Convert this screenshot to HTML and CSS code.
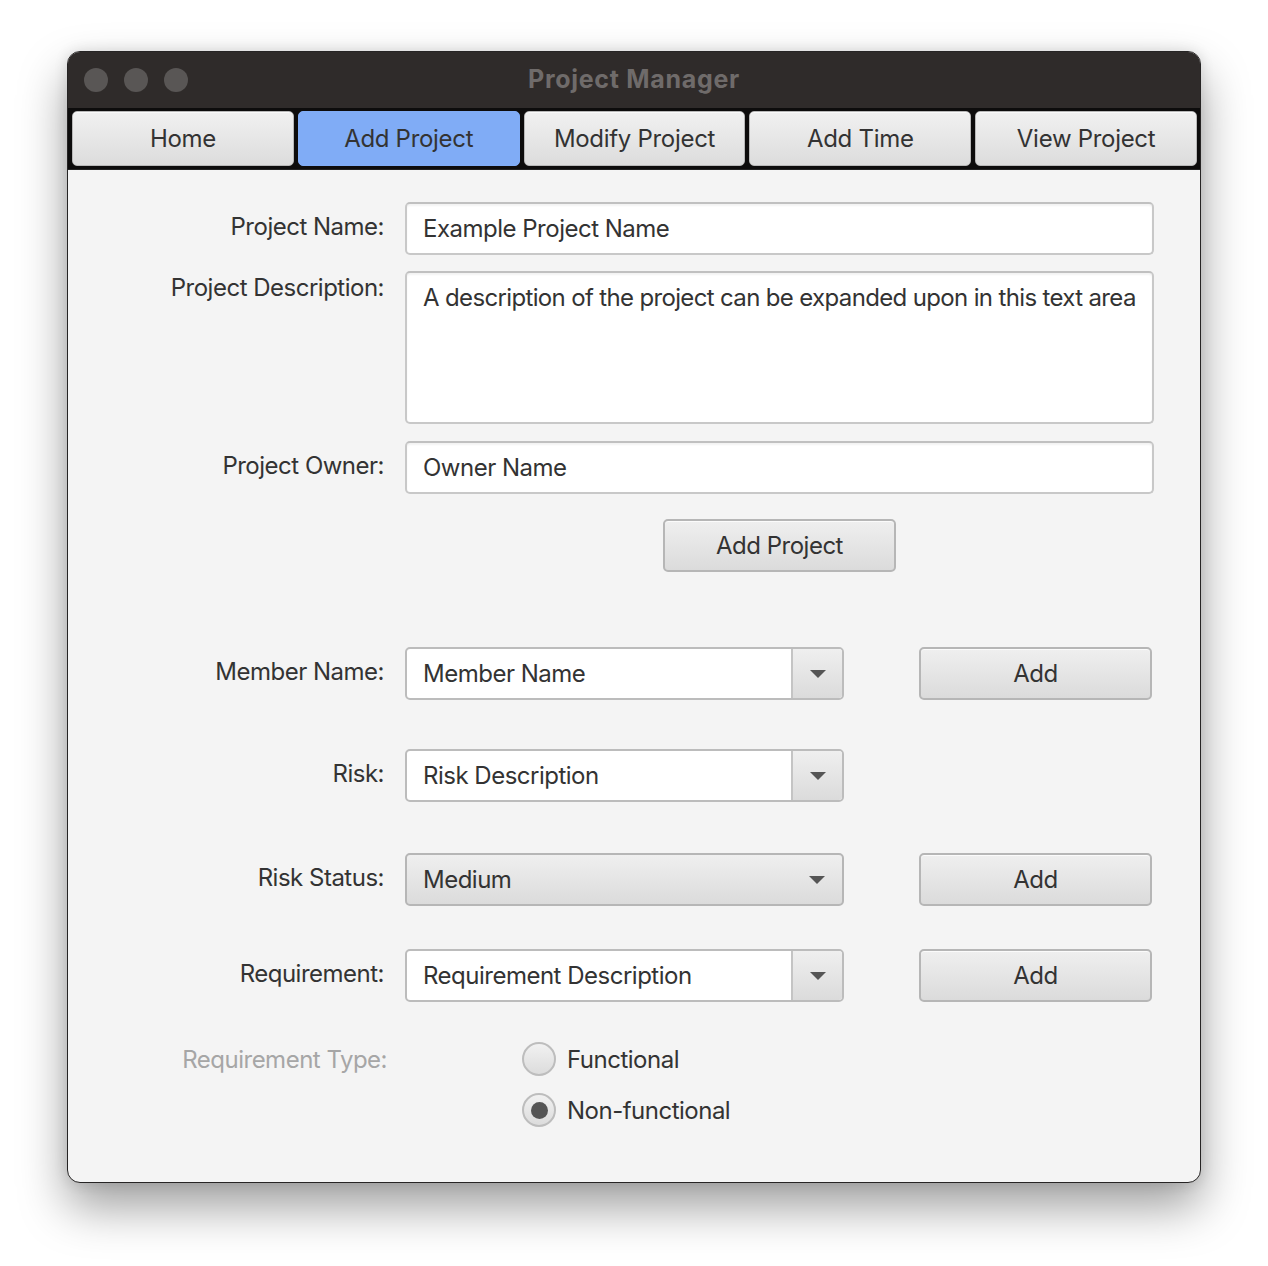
FILE: index.html
```html
<!DOCTYPE html>
<html>
<head>
<meta charset="utf-8">
<link rel="stylesheet" href="styles.css">
</head>
<body>
<div class="window">
  <div class="titlebar">
    <div class="lights"><span class="light"></span><span class="light"></span><span class="light"></span></div>
    <div class="title">Project Manager</div>
  </div>
  <div class="tabbar">
    <div class="tab">Home</div>
    <div class="tab active">Add Project</div>
    <div class="tab">Modify Project</div>
    <div class="tab">Add Time</div>
    <div class="tab">View Project</div>
  </div>
  <div class="content">
    <div class="row r-name">
      <div class="label">Project Name:</div>
      <div class="field wide">Example Project Name</div>
    </div>
    <div class="row r-desc top">
      <div class="label desc-label">Project Description:</div>
      <div class="field wide area">A description of the project can be expanded upon in this text area</div>
    </div>
    <div class="row r-owner">
      <div class="label">Project Owner:</div>
      <div class="field wide">Owner Name</div>
    </div>
    <div class="row r-addproj">
      <div class="label"></div>
      <div class="btn addproj">Add Project</div>
    </div>
    <div class="row r-member">
      <div class="label">Member Name:</div>
      <div class="combo"><div class="combo-text">Member Name</div><div class="combo-arrow"><span class="tri"></span></div></div>
      <div class="btn add">Add</div>
    </div>
    <div class="row r-risk">
      <div class="label">Risk:</div>
      <div class="combo"><div class="combo-text">Risk Description</div><div class="combo-arrow"><span class="tri"></span></div></div>
    </div>
    <div class="row r-status">
      <div class="label">Risk Status:</div>
      <div class="combo choice"><div class="combo-text">Medium</div><div class="combo-arrow plain"><span class="tri"></span></div></div>
      <div class="btn add">Add</div>
    </div>
    <div class="row r-req">
      <div class="label">Requirement:</div>
      <div class="combo"><div class="combo-text">Requirement Description</div><div class="combo-arrow"><span class="tri"></span></div></div>
      <div class="btn add">Add</div>
    </div>
    <div class="row r-type top">
      <div class="label disabled">Requirement Type:</div>
      <div class="radios">
        <div class="radio"><span class="dot"></span><span class="rtext">Functional</span></div>
        <div class="radio"><span class="dot on"></span><span class="rtext">Non-functional</span></div>
      </div>
    </div>
  </div>
</div>
</body>
</html>
```
FILE: styles.css
```css
* { box-sizing: border-box; }
html, body { margin: 0; padding: 0; background: #ffffff; }
body {
  width: 1268px;
  height: 1266px;
  padding: 51px 67px 0 67px;
  font-family: Inter, "Noto Sans", "Liberation Sans", sans-serif;
  color: #333333;
}
.window {
  width: 1134px;
  height: 1132px;
  border: 1px solid #262424;
  border-radius: 13px;
  overflow: hidden;
  background: #f4f4f4;
  box-shadow: 0 24px 48px rgba(0,0,0,0.38), 0 0 14px rgba(0,0,0,0.12);
  display: flex;
  flex-direction: column;
}
.titlebar {
  height: 56px;
  background: #2f2b2a;
  display: flex;
  align-items: center;
  position: relative;
}
.lights { display: flex; gap: 16px; padding-left: 16px; }
.light { width: 24px; height: 24px; border-radius: 50%; background: #595655; display: block; }
.title {
  position: absolute;
  left: 0; right: 0;
  top: 12px;
  text-align: center;
  font-weight: 700;
  font-size: 25px;
  color: #6f6b6a;
  letter-spacing: 0.7px;
}
.tabbar {
  height: 62px;
  background: #0d0c0c;
  display: flex;
  gap: 4px;
  padding: 3px 3px 3px 4px;
  border-bottom: 1px solid #222;
}
.tab {
  flex: 1;
  border-radius: 5px;
  border: 1px solid #b8b8b8;
  background: linear-gradient(#f1f1f1, #dcdcdc);
  box-shadow: inset 0 1px 0 #fafafa;
  display: flex;
  align-items: center;
  justify-content: center;
  font-size: 24px;
  color: #333;
  letter-spacing: -0.3px;
}
.tab.active {
  background: #80acf6;
  border-color: #80acf6;
  box-shadow: none;
}
.content {
  flex: 1;
  padding-top: 32px;
}
.row { display: flex; align-items: center; }
.row.top { align-items: flex-start; }
.label {
  width: 316px;
  margin-right: 21px;
  text-align: right;
  font-size: 24px;
  letter-spacing: -0.5px;
  color: #333;
  position: relative;
  top: -2px;
  white-space: nowrap;
}
.desc-label { top: 2px; }
.label.disabled { color: #a6a6a6; top: 3px; width: 319px; margin-right: 18px; }
.field {
  height: 53px;
  background: #fff;
  border: 2px solid #c8c8c8;
  border-top-color: #c0c0c0;
  border-radius: 5px;
  box-shadow: inset 0 2px 2px rgba(0,0,0,0.05);
  font-size: 24px;
  letter-spacing: -0.5px;
  color: #333;
  padding-left: 16px;
  display: flex;
  align-items: center;
  white-space: nowrap;
  overflow: hidden;
}
.field.wide { width: 749px; }
.field.area { height: 153px; align-items: flex-start; padding-top: 10px; letter-spacing: -0.65px; }
.r-desc { margin-top: 16px; }
.r-owner { margin-top: 17px; }
.r-addproj { margin-top: 25px; }
.r-member { margin-top: 75px; }
.r-risk { margin-top: 49px; }
.r-status { margin-top: 51px; }
.r-req { margin-top: 43px; }
.r-type { margin-top: 40px; }
.btn {
  height: 53px;
  border: 2px solid #b6b6b6;
  border-radius: 5px;
  background: linear-gradient(#efefef, #dbdbdb);
  box-shadow: inset 0 1px 0 #fbfbfb;
  display: flex;
  align-items: center;
  justify-content: center;
  font-size: 24px;
  letter-spacing: -0.5px;
  color: #333;
}
.addproj { width: 233px; margin-left: 258px; }
.add { width: 233px; margin-left: 75px; }
.combo {
  width: 439px;
  height: 53px;
  border: 2px solid #bcbcbc;
  border-radius: 5px;
  background: #fff;
  display: flex;
  overflow: hidden;
}
.combo-text {
  flex: 1;
  display: flex;
  align-items: center;
  padding-left: 16px;
  font-size: 24px;
  letter-spacing: -0.5px;
  color: #333;
}
.combo-arrow {
  width: 51px;
  border-left: 2px solid #c4c4c4;
  background: linear-gradient(#efefef, #dbdbdb);
  display: flex;
  align-items: center;
  justify-content: center;
}
.combo.choice { background: linear-gradient(#efefef, #dbdbdb); border-color: #b6b6b6; }
.combo-arrow.plain { border-left: none; background: transparent; }
.tri {
  width: 0; height: 0;
  border-left: 8px solid transparent;
  border-right: 8px solid transparent;
  border-top: 8px solid #555;
  margin-top: 1px;
}
.radios {
  margin-left: 117px;
  display: flex;
  flex-direction: column;
  gap: 17px;
}
.radio { display: flex; align-items: center; gap: 11px; }
.dot {
  width: 34px; height: 34px;
  border-radius: 50%;
  border: 2px solid #bdbdbd;
  background: linear-gradient(#f1f1f1, #dcdcdc);
  display: flex;
  align-items: center;
  justify-content: center;
}
.dot.on::after {
  content: "";
  width: 17px; height: 17px;
  border-radius: 50%;
  background: #555;
}
.rtext { font-size: 24px; letter-spacing: -0.5px; color: #333; }
```
